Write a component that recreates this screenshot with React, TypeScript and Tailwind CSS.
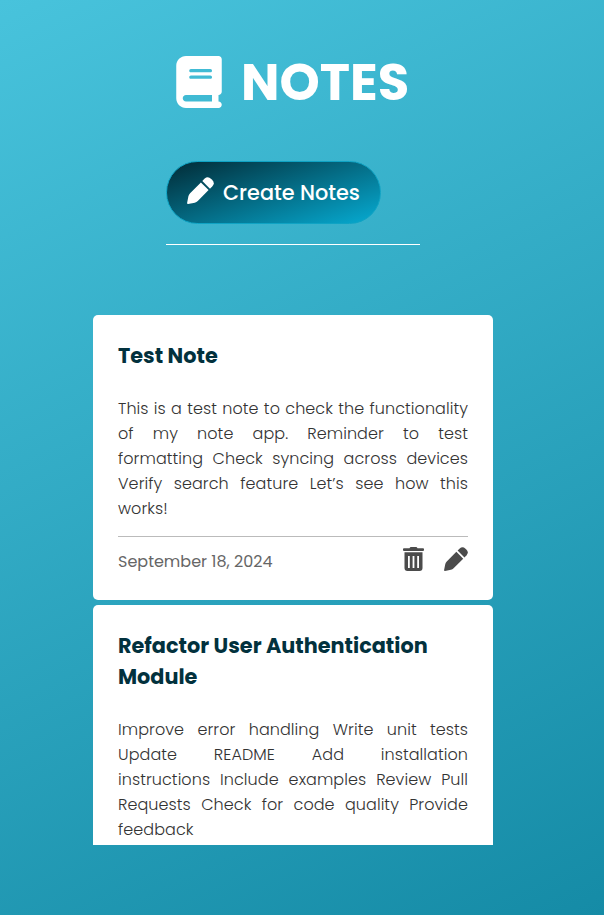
import React from "react";
import { FaBook } from "react-icons/fa6";

function Pencil({ className }: { className: string }) {
  return (
    <svg viewBox="0 0 27 27" fill="currentColor" className={className}>
      <path d="M13.9 5.4 3.1 16.2Q1.8 17.5 1.4 19.3L.1 25.9Q0 27 1.1 26.9L7.8 25.7Q9.5 25.3 10.8 24L21.6 13.1Z" />
      <path d="M15.3 4 17.7 1.6Q20.8-1.3 24.2 1.9L25.1 2.8Q28.3 6.2 25.4 9.3L23 11.7Z" />
    </svg>
  );
}

function Trash({ className }: { className: string }) {
  return (
    <svg viewBox="0 0 21 24" fill="currentColor" className={className}>
      <path d="M6.5 1.2Q7 0 8 0H13Q14 0 14.5 1.2H20Q21 1.2 21 2.1V3.1Q21 4 20 4H1Q0 4 0 3.1V2.1Q0 1.2 1 1.2Z" />
      <path fillRule="evenodd" d="M1.5 5.3H19.5V21Q19.5 24 16.5 24H4.5Q1.5 24 1.5 21ZM5 9V21H6.8V9ZM9.6 9V21H11.4V9ZM14.2 9V21H16V9Z" />
    </svg>
  );
}

type Line = { text: string; last?: boolean };

function Body({ lines }: { lines: Line[] }) {
  return (
    <p className="mt-[25px] text-[16px] leading-[25px] font-light tracking-[0.07px] text-[#333]">
      {lines.map((l) => (
        <span
          key={l.text}
          className={
            l.last
              ? "block whitespace-nowrap"
              : "block whitespace-nowrap text-justify [text-align-last:justify]"
          }
        >
          {l.text}
        </span>
      ))}
    </p>
  );
}

const first: Line[] = [
  { text: "This is a test note to check the functionality" },
  { text: "of my note app. Reminder to test" },
  { text: "formatting Check syncing across devices" },
  { text: "Verify search feature Let’s see how this" },
  { text: "works!", last: true },
];

const second: Line[] = [
  { text: "Improve error handling Write unit tests" },
  { text: "Update README Add installation" },
  { text: "instructions Include examples Review Pull" },
  { text: "Requests Check for code quality Provide" },
  { text: "feedback", last: true },
];

export default function App() {
  return (
    <main className="h-[915px] w-[604px] overflow-hidden bg-[linear-gradient(155deg,#48c3dc,#158ba6)] font-['Poppins','Inter',sans-serif]">
      <header className="ml-[166px] w-[254px] border-b border-white pt-[50px] pb-[20px] text-white">
        <h1 className="flex h-[64px] items-center pl-[10px] text-[51.2px] leading-[64px] font-bold">
          <FaBook className="h-[52px] w-[46px] shrink-0" />
          <span className="ml-[19px] whitespace-nowrap">NOTES</span>
        </h1>
        <button className="mt-[47px] flex h-[63px] w-[215px] items-center rounded-full border border-[#0fa3c4] bg-[linear-gradient(162deg,#022b36,#06abd2)] pl-[20px] text-[20.8px] font-medium">
          <Pencil className="mb-[4px] h-[27px] w-[27px] shrink-0" />
          <span className="ml-[9px] whitespace-nowrap">Create Notes</span>
        </button>
      </header>

      <section className="mt-[70px] ml-[93px] flex h-[530px] w-[400px] flex-col gap-[5px] overflow-hidden">
        <article className="h-[285px] shrink-0 rounded-[5px] bg-white p-[25px]">
          <h2 className="text-[20.8px] leading-[31px] font-bold text-[#02313d]">Test Note</h2>
          <Body lines={first} />
          <footer className="mt-[15px] flex border-t border-[#bbb] pt-[10px] text-[#4b4b4b]">
            <time className="mt-[2px] text-[16px] leading-[25px] text-[#666]">September 18, 2024</time>
            <Trash className="ml-auto h-[24px] w-[21px]" />
            <Pencil className="ml-[20px] h-[24px] w-[24px]" />
          </footer>
        </article>
        <article className="h-[320px] shrink-0 rounded-[5px] bg-white p-[25px]">
          <h2 className="text-[20.8px] leading-[31px] font-bold text-[#02313d]">
            Refactor User Authentication
            <br />
            Module
          </h2>
          <Body lines={second} />
        </article>
      </section>
    </main>
  );
}
